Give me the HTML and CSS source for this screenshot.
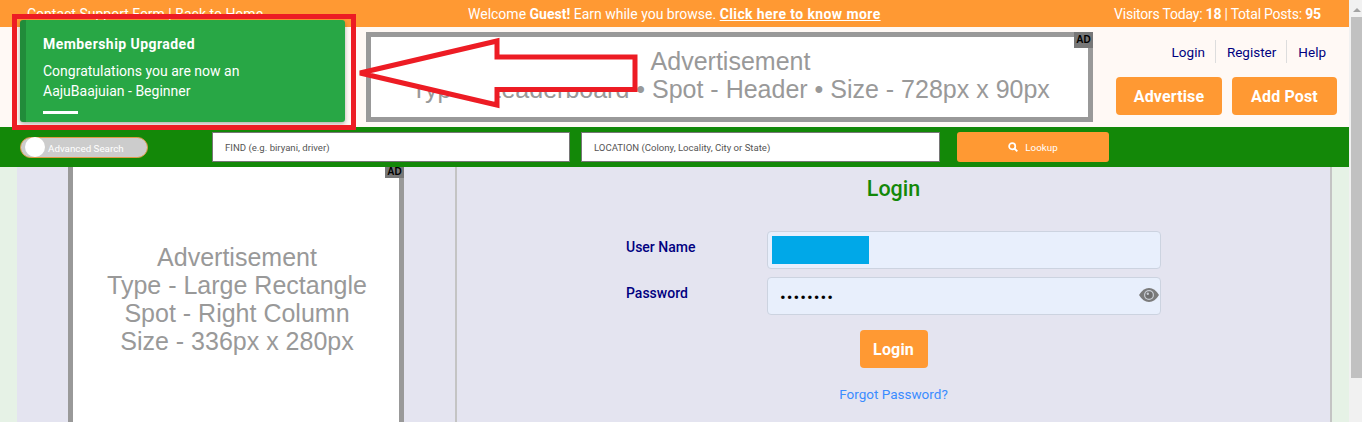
FILE: index.html
```html
<!DOCTYPE html>
<html lang="en">
<head>
  <meta charset="UTF-8">
  <title>Login - AajuBaaju</title>
  <link rel="stylesheet" href="styles.css">
</head>
<body>
  <div class="page">
    <!-- Top strip -->
    <div class="topbar">
      <div class="top-left">Contact Support Form | Back to Home</div>
      <div class="top-mid">Welcome <b>Guest!</b> Earn while you browse. <a href="#">Click here to know more</a></div>
      <div class="top-right">Visitors Today: <b>18</b> | Total Posts: <b>95</b></div>
    </div>

    <!-- Header with leaderboard ad -->
    <div class="header">
      <div class="ad ad-header">
        <span class="ad-tag">AD</span>
        <div>Advertisement</div>
        <div>Type - Leaderboard &bull; Spot - Header &bull; Size - 728px x 90px</div>
      </div>
      <div class="header-side">
        <div class="user-links">
          <a href="#">Login</a>
          <a href="#">Register</a>
          <a href="#">Help</a>
        </div>
        <div class="header-btns">
          <a href="#" class="btn btn-advertise">Advertise</a>
          <a href="#" class="btn btn-post">Add Post</a>
        </div>
      </div>
    </div>

    <!-- Search bar -->
    <div class="searchbar">
      <div class="toggle"><span class="knob"></span><span class="toggle-text">Advanced Search</span></div>
      <input class="search-input find" placeholder="FIND (e.g. biryani, driver)">
      <input class="search-input location" placeholder="LOCATION (Colony, Locality, City or State)">
      <a href="#" class="lookup">
        <svg width="10" height="10" viewBox="0 0 10 10"><circle cx="4.2" cy="4.2" r="3.1" fill="none" stroke="#fff" stroke-width="1.7"/><path d="M6.500 6.500L9.300 9.300" stroke="#fff" stroke-width="1.900"/></svg>
        Lookup
      </a>
    </div>

    <!-- Content -->
    <div class="content">
      <div class="side-col">
        <div class="ad ad-side">
          <span class="ad-tag">AD</span>
          <div>Advertisement</div>
          <div>Type - Large Rectangle</div>
          <div>Spot - Right Column</div>
          <div>Size - 336px x 280px</div>
        </div>
      </div>
      <div class="login-col">
        <h2>Login</h2>
        <div class="form-row">
          <label>User Name</label>
          <div class="field"><span class="redact"></span></div>
        </div>
        <div class="form-row">
          <label>Password</label>
          <div class="field field-pass">
            <span class="dots">&bull;&bull;&bull;&bull;&bull;&bull;&bull;&bull;</span>
            <svg class="eye" width="20" height="14" viewBox="0 0 20 14"><path d="M0 7C2.800 2.400 6 0 10 0S17.200 2.400 20 7C17.200 11.600 14 14 10 14S2.800 11.600 0 7Z" fill="#7b7b7b"/><circle cx="10" cy="7" r="5" fill="#c9cdd4"/><circle cx="10" cy="7" r="3.800" fill="#6f6f6f"/><circle cx="8.800" cy="5.700" r="1.200" fill="#c9cdd4"/></svg>
          </div>
        </div>
        <a href="#" class="btn btn-login">Login</a>
        <a href="#" class="forgot">Forgot Password?</a>
      </div>
    </div>
  </div>

  <div class="scrollbar">
    <span class="arrow"></span>
    <span class="thumb"></span>
  </div>

  <!-- Toast and the red marks on top of the screenshot -->
  <div class="toast">
    <div class="toast-title">Membership Upgraded</div>
    <div class="toast-msg">Congratulations you are now an AajuBaajuian - Beginner</div>
    <div class="toast-bar"></div>
  </div>
  <div class="red-box"></div>
  <svg class="red-arrow" width="282" height="74" viewBox="0 0 282 74">
    <path d="M2 37L139 5V21H277V53.500H139V69Z" fill="#fff" stroke="#ed1c24" stroke-width="5"/>
  </svg>
</body>
</html>
```

FILE: styles.css
```css
* {
  box-sizing: border-box;
}
body {
  margin: 0;
  height: 422px;
  overflow: hidden;
  display: flex;
  font-family: Roboto, "Open Sans", sans-serif;
  background-color: #e6f2e6;
}
a {
  text-decoration: none;
}
.page {
  width: 1349px;
  height: 422px;
  flex-shrink: 0;
  display: flex;
  flex-direction: column;
}

/* Top strip */
.topbar {
  height: 27px;
  flex-shrink: 0;
  background-color: #ff9933;
  color: #fff;
  font-size: 14px;
  display: flex;
  align-items: center;
  padding: 0 12px 0 27px;
}
.top-left {
  width: 441px;
}
.top-mid {
  width: 646px;
}
.top-mid a {
  color: #fff;
  font-weight: bold;
  letter-spacing: 0.4px;
  text-decoration: underline;
}
.top-right {
  letter-spacing: -0.22px;
}

/* Header */
.header {
  height: 100px;
  flex-shrink: 0;
  background-color: #fff9f5;
  display: flex;
  padding: 5px 12px 0 366px;
}
.ad {
  position: relative;
  background-color: #fff;
  border: 5px solid #999;
  color: #999;
  font-family: "Liberation Sans", Arial, sans-serif;
  font-size: 25px;
  line-height: 28px;
  text-align: center;
}
.ad-tag {
  position: absolute;
  top: -5px;
  right: -5px;
  width: 19px;
  height: 16px;
  background-color: #777;
  color: #000;
  font-size: 10px;
  font-weight: bold;
  line-height: 15px;
}
.ad-header {
  width: 727px;
  height: 90px;
  padding: 10px 0 0 2px;
}
.header-side {
  margin-left: 23px;
  flex: 1;
}
.user-links {
  display: flex;
  justify-content: flex-end;
  margin-top: 8px;
  height: 23px;
}
.user-links a {
  color: #000080;
  font-size: 13.500px;
  line-height: 25px;
  padding: 0 10px 0 11px;
  border-left: 1px solid #ddd;
}
.user-links a:first-child {
  border-left: 0;
}
.user-links a:last-child {
  padding-right: 11px;
}
.header-btns {
  display: flex;
  gap: 10px;
  margin-top: 14px;
}
.btn {
  display: block;
  background-color: #ff9933;
  color: #fff;
  font-size: 16px;
  font-weight: bold;
  letter-spacing: 0.15px;
  line-height: 40px;
  height: 38px;
  text-align: center;
  border-radius: 4px;
}
.btn-advertise {
  width: 106px;
}
.btn-post {
  width: 105px;
}

/* Search bar */
.searchbar {
  height: 40px;
  flex-shrink: 0;
  background-color: #138808;
  display: flex;
  align-items: center;
  padding-left: 20px;
}
.toggle {
  width: 128px;
  height: 21px;
  margin-right: 64px;
  background-color: #ccc;
  border: 1px solid #e09a45;
  border-radius: 11px;
  color: #fff;
  font-size: 9.800px;
  display: flex;
  align-items: center;
  gap: 3px;
  padding-left: 4px;
}
.toggle-text {
  margin-top: 2px;
}
.knob {
  width: 20px;
  height: 20px;
  background-color: #fff;
  border-radius: 50%;
}
.search-input {
  height: 30px;
  background-color: #fff;
  border: 1px solid #767676;
  font-family: inherit;
  font-size: 9.600px;
  padding: 0 12px;
  outline: 0;
}
.search-input::placeholder {
  color: #555;
}
.find {
  width: 358px;
  margin-right: 11px;
}
.location {
  width: 359px;
  margin-right: 17px;
}
.lookup {
  width: 152px;
  height: 30px;
  background-color: #ff9933;
  border-radius: 3px;
  color: #fff;
  font-size: 9.800px;
  display: flex;
  align-items: center;
  justify-content: center;
  gap: 7px;
}

/* Content */
.content {
  flex: 1;
  min-height: 0;
  overflow: hidden;
  margin: 0 17px;
  background-color: #e4e4f0;
  display: flex;
  border-right: 2px solid #c4c4c4;
}
.side-col {
  width: 440px;
  padding-left: 51px;
  border-right: 2px solid #c4c4c4;
}
.ad-side {
  width: 336px;
  height: 280px;
  border-top: 0;
  padding: 76px 0 0 2px;
}
.ad-side .ad-tag {
  top: 0;
  height: 11px;
  line-height: 10px;
}
.login-col {
  flex: 1;
  display: flex;
  flex-direction: column;
  align-items: center;
}
.login-col h2 {
  margin: 8px 0 28px;
  color: #138808;
  font-size: 21.500px;
  font-weight: 500;
  line-height: 28px;
}
.form-row {
  width: 535px;
  display: flex;
  margin-bottom: 8px;
}
.form-row label {
  width: 141px;
  color: #000080;
  font-size: 14px;
  font-weight: 500;
  line-height: 32px;
}
.field {
  width: 394px;
  height: 38px;
  background-color: #e8effc;
  border: 1px solid #ccd3e0;
  border-radius: 4px;
  display: flex;
  align-items: center;
  padding-left: 4px;
}
.redact {
  width: 97px;
  height: 28px;
  background-color: #00a8e8;
}
.field-pass {
  justify-content: space-between;
  padding: 0 0 0 12px;
}
.dots {
  color: #000;
  font-size: 17px;
  letter-spacing: 1px;
  margin-top: 2px;
}
.eye {
  margin-right: 1px;
  margin-top: -2px;
}
.btn-login {
  width: 68px;
  margin-top: 7px;
}
.forgot {
  margin-top: 18px;
  color: #3b8cff;
  font-size: 13.500px;
}

/* Scrollbar */
.scrollbar {
  width: 13px;
  flex-shrink: 0;
  background-color: #f1f1f1;
  display: flex;
  flex-direction: column;
  align-items: flex-end;
}
.arrow {
  margin: 8px 1px 0 0;
  border: 4px solid transparent;
  border-top: 0;
  border-bottom-color: #a3a3a3;
}
.thumb {
  width: 11px;
  height: 361px;
  margin-top: 5px;
  background-color: #c1c1c1;
}

/* Overlays */
.toast {
  position: absolute;
  left: 20px;
  top: 20px;
  width: 325px;
  height: 102px;
  background-color: #28a745;
  border-left: 6px solid #218c3a;
  border-radius: 3px;
  box-shadow: 0 2px 4px rgba(0,0,0,0.3);
  color: #fff;
  padding: 15px 17px;
}
.toast-title {
  font-size: 14px;
  font-weight: bold;
  letter-spacing: 0.45px;
  line-height: 18px;
  margin-bottom: 8px;
}
.toast-msg {
  width: 240px;
  font-size: 14px;
  line-height: 20px;
}
.toast-bar {
  width: 35px;
  height: 3px;
  margin-top: 10px;
  background-color: #fff;
}
.red-box {
  position: absolute;
  left: 12px;
  top: 14px;
  width: 344px;
  height: 116px;
  border: 5px solid #ed1c24;
}
.red-arrow {
  position: absolute;
  left: 358px;
  top: 36px;
}
```
